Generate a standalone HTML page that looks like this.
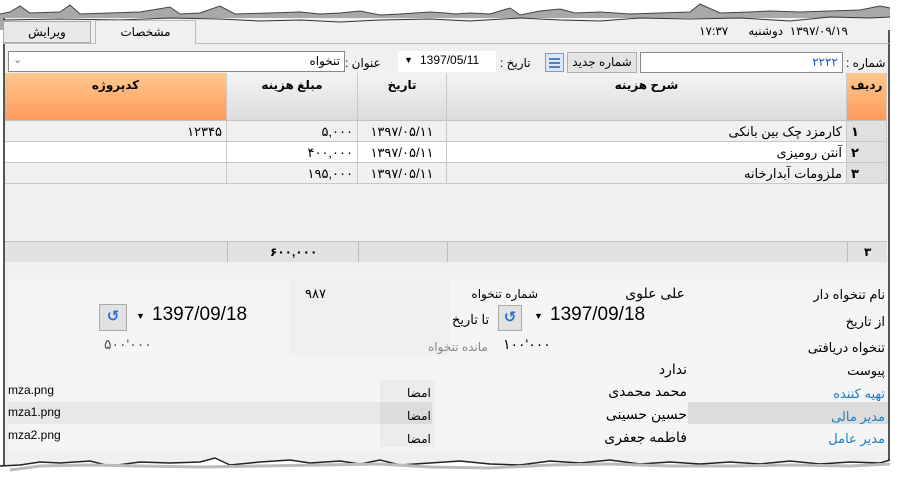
<!DOCTYPE html>
<html><head><meta charset="utf-8"><style>
*{margin:0;padding:0;box-sizing:border-box}
body{width:901px;height:486px;background:#fff;position:relative;overflow:hidden;font-family:"Liberation Sans","DejaVu Sans",sans-serif;font-size:12px;color:#000}
.a{position:absolute}
.win{left:3px;top:18px;width:887px;height:452px;background:#f0f0f0;border-left:2px solid #555;border-right:2px solid #555}
.r{direction:rtl;white-space:nowrap}
.hd{background:linear-gradient(#f4f4f4,#dcdcdc);border-right:1px solid #c8c8c8;font-weight:bold;text-align:center;padding-top:5px;font-size:12px}
.or{background:linear-gradient(#ffc98e,#ff9a5c)}
.cell{border-right:1px solid #c8c8c8;border-bottom:1px solid #c8c8c8;height:21px;line-height:21px;padding:0 4px;font-size:13px}
.lbl{color:#000;font-size:13px}
.blue{color:#1a7fc4}
</style></head><body>
<svg class="a" style="left:0;top:0" width="901" height="30"><polygon points="0,30 0,14 10,12 20,6 30,13 60,12 70,5 80,14 110,13 140,12 170,7 180,14 200,13 220,6 235,14 270,13 300,12 320,14 340,13 360,11 380,15 400,14 430,12 445,13 455,14 470,13 490,14 510,8 520,15 540,11 560,9 575,13 600,12 630,14 660,13 690,12 700,4 720,13 750,12 770,11 800,12 830,11 860,10 880,6 890,8 890,30" fill="#a8a8a8"/><polyline points="0,14 10,12 20,6 30,13 60,12 70,5 80,14 110,13 140,12 170,7 180,14 200,13 220,6 235,14 270,13 300,12 320,14 340,13 360,11 380,15 400,14 430,12 445,13 455,14 470,13 490,14 510,8 520,15 540,11 560,9 575,13 600,12 630,14 660,13 690,12 700,4 720,13 750,12 770,11 800,12 830,11 860,10 880,6 890,8" fill="none" stroke="#444"/></svg>
<div class="a win"></div>
<svg class="a" style="left:0;top:0" width="901" height="30"><polygon points="3,30 3,20 60,19 120,20 170,18 220,19 260,21 300,20 340,22 380,20 430,19 470,21 520,18 560,20 600,21 640,18 690,19 740,18 790,21 830,17 870,18 890,17 890,30" fill="#f0f0f0"/><polyline points="3,20 60,19 120,20 170,18 220,19 260,21 300,20 340,22 380,20 430,19 470,21 520,18 560,20 600,21 640,18 690,19 740,18 790,21 830,17 870,18 890,17" fill="none" stroke="#333"/></svg>
<div class="a" style="left:3px;top:21px;width:88px;height:22px;border:1px solid #aaa;background:#e8e8e8;text-align:center;line-height:20px;font-size:12px">ویرایش</div>
<div class="a" style="left:95px;top:20px;width:101px;height:24px;border:1px solid #bbb;border-bottom:none;background:#f0f0f0;text-align:center;line-height:22px;font-size:12px">مشخصات</div>
<div class="a" style="left:3px;top:43px;width:92px;border-top:1px solid #bbb"></div>
<div class="a" style="left:196px;top:43px;width:693px;border-top:1px solid #bbb"></div>
<div class="a r" style="right:53px;top:24px;font-size:12px">۱۳۹۷/۰۹/۱۹&nbsp;&nbsp;دوشنبه&nbsp;&nbsp;&nbsp;&nbsp;&nbsp;&nbsp;۱۷:۳۷</div>
<div class="a r" style="left:846px;top:56px;font-size:12px">شماره :</div>
<div class="a r" style="left:640px;top:52px;width:203px;height:21px;background:#fff;border:1px solid #888;font-size:12px;padding:2px 4px;color:#1a5fb4">۲۲۲۲</div>
<div class="a" style="left:567px;top:52px;width:70px;height:21px;background:#e3e3e3;border:1px solid #adadad;font-size:12px;text-align:center;line-height:19px">شماره جدید</div>
<div class="a" style="left:545px;top:53px;width:19px;height:19px;background:#dbe8f8;border:1px solid #7a9cc8"><svg width="17" height="17"><g stroke="#2a5da8" stroke-width="1.5"><line x1="3" y1="5" x2="14" y2="5"/><line x1="3" y1="9" x2="14" y2="9"/><line x1="3" y1="13" x2="14" y2="13"/></g></svg></div>
<div class="a r" style="left:500px;top:56px;font-size:12px">تاریخ :</div>
<div class="a" style="left:398px;top:51px;width:98px;height:21px;background:#fff;font-size:12px;line-height:19px;padding-left:22px">1397/05/11</div>
<div class="a" style="left:404px;top:55px;font-size:9px">&#9660;</div>
<div class="a r" style="left:345px;top:56px;font-size:12px">عنوان :</div>
<div class="a r" style="left:8px;top:51px;width:337px;height:21px;background:#fff;border:1px solid #888;font-size:12px;padding:2px 4px">تنخواه</div>
<div class="a" style="left:13px;top:53px;font-size:11px;color:#777">&#8964;</div>
<div class="a" style="left:5px;top:73px;width:882px;height:48px;background:#e0e0e0;border-bottom:1px solid #c0c0c0"></div>
<div class="a hd or r" style="left:847px;top:73px;width:40px;height:47px">ردیف</div>
<div class="a hd r" style="left:447px;top:73px;width:400px;height:47px">شرح هزینه</div>
<div class="a hd r" style="left:358px;top:73px;width:89px;height:47px">تاریخ</div>
<div class="a hd r" style="left:227px;top:73px;width:131px;height:47px">مبلغ هزینه</div>
<div class="a hd or r" style="left:5px;top:73px;width:222px;height:47px">کدپروژه</div>
<div class="a" style="left:5px;top:121px;width:882px">
<div style="display:flex;flex-direction:row-reverse;background:#f0f0f0"><div class="cell" style="width:40px;background:#e0e0e0;font-weight:bold">۱</div><div class="cell r" style="width:400px">کارمزد چک بین بانکی</div><div class="cell" style="width:89px;text-align:center">۱۳۹۷/۰۵/۱۱</div><div class="cell" style="width:131px;text-align:right">۵,۰۰۰</div><div class="cell" style="width:222px;text-align:right">۱۲۳۴۵</div></div>
<div style="display:flex;flex-direction:row-reverse;background:#fff"><div class="cell" style="width:40px;background:#e0e0e0;font-weight:bold">۲</div><div class="cell r" style="width:400px">آنتن رومیزی</div><div class="cell" style="width:89px;text-align:center">۱۳۹۷/۰۵/۱۱</div><div class="cell" style="width:131px;text-align:right">۴۰۰,۰۰۰</div><div class="cell" style="width:222px"></div></div>
<div style="display:flex;flex-direction:row-reverse;background:#f0f0f0"><div class="cell" style="width:40px;background:#e0e0e0;font-weight:bold">۳</div><div class="cell r" style="width:400px">ملزومات آبدارخانه</div><div class="cell" style="width:89px;text-align:center">۱۳۹۷/۰۵/۱۱</div><div class="cell" style="width:131px;text-align:right">۱۹۵,۰۰۰</div><div class="cell" style="width:222px"></div></div>
</div>
<div class="a" style="left:5px;top:241px;width:882px;height:21px;background:#e2e2e2;border-top:1px solid #c0c0c0"></div>
<div class="a" style="left:847px;top:241px;width:1px;height:21px;background:#bbb"></div>
<div class="a" style="left:447px;top:241px;width:1px;height:21px;background:#bbb"></div>
<div class="a" style="left:358px;top:241px;width:1px;height:21px;background:#bbb"></div>
<div class="a" style="left:227px;top:241px;width:1px;height:21px;background:#bbb"></div>
<div class="a" style="left:864px;top:245px;font-size:12px;font-weight:bold">۳</div>
<div class="a" style="left:270px;top:245px;font-size:12px;font-weight:bold">۶۰۰,۰۰۰</div>
<div class="a" style="left:8px;top:279px;width:880px;height:172px;background:#f5f5f5"></div>
<div class="a" style="left:290px;top:280px;width:160px;height:75px;background:#efefef"></div>
<div class="a r lbl" style="right:16px;top:287px">نام تنخواه دار</div>
<div class="a r lbl" style="right:16px;top:314px">از تاریخ</div>
<div class="a r lbl" style="right:16px;top:340px">تنخواه دریافتی</div>
<div class="a r lbl" style="right:16px;top:363px">پیوست</div>
<div class="a" style="left:688px;top:402px;width:200px;height:22px;background:#dcdcdc"></div>
<div class="a" style="left:8px;top:402px;width:372px;height:22px;background:#e8e8e8"></div>
<div class="a" style="left:380px;top:380px;width:55px;height:67px;background:#ececec"></div>
<div class="a" style="left:380px;top:402px;width:52px;height:22px;background:#dcdcdc"></div>
<div class="a r lbl blue" style="right:16px;top:386px">تهیه کننده</div>
<div class="a r lbl blue" style="right:16px;top:409px">مدیر مالی</div>
<div class="a r lbl blue" style="right:16px;top:431px">مدیر عامل</div>
<div class="a r" style="right:216px;top:285px;font-size:14px">علی علوی</div>
<div class="a r" style="right:363px;top:287px;font-size:12px">شماره تنخواه</div>
<div class="a" style="left:305px;top:286px;font-size:13px">۹۸۷</div>
<div class="a" style="left:550px;top:304px;font-size:19px">1397/09/18</div>
<div class="a" style="left:534px;top:311px;font-size:9px">&#9660;</div>
<div class="a" style="left:498px;top:305px;width:24px;height:26px;background:#e2e2e2;border:1px solid #aaa;text-align:center;color:#2b6fd0;font-weight:bold;font-size:15px;line-height:23px">&#8634;</div>
<div class="a r" style="left:452px;top:312px;font-size:13px">تا تاریخ</div>
<div class="a" style="left:152px;top:304px;font-size:19px">1397/09/18</div>
<div class="a" style="left:136px;top:311px;font-size:9px">&#9660;</div>
<div class="a" style="left:99px;top:304px;width:28px;height:27px;background:#e2e2e2;border:1px solid #aaa;text-align:center;color:#2b6fd0;font-weight:bold;font-size:15px;line-height:24px">&#8634;</div>
<div class="a" style="left:503px;top:336px;font-size:14px;letter-spacing:2px">۱۰۰'۰۰۰</div>
<div class="a r" style="left:428px;top:340px;font-size:12px;color:#888">مانده تنخواه</div>
<div class="a" style="left:104px;top:336px;font-size:14px;letter-spacing:2px;color:#555">۵۰۰'۰۰۰</div>
<div class="a r" style="right:214px;top:361px;font-size:14px">ندارد</div>
<div class="a r" style="right:214px;top:383px;font-size:14px">محمد محمدی</div>
<div class="a r" style="right:214px;top:406px;font-size:14px">حسین حسینی</div>
<div class="a r" style="right:214px;top:429px;font-size:14px">فاطمه جعفری</div>
<div class="a r" style="left:407px;top:386px;font-size:12px">امضا</div>
<div class="a r" style="left:407px;top:409px;font-size:12px">امضا</div>
<div class="a r" style="left:407px;top:432px;font-size:12px">امضا</div>
<div class="a" style="left:8px;top:383px;font-size:12px">mza.png</div>
<div class="a" style="left:8px;top:405px;font-size:12px">mza1.png</div>
<div class="a" style="left:8px;top:428px;font-size:12px">mza2.png</div>
<svg class="a" style="left:0;top:450px" width="901" height="36"><polygon points="0,36 0,16 20,15 40,12 60,13 90,11 110,16 140,12 170,13 200,12 215,8 230,15 260,12 290,10 310,13 340,11 360,14 380,10 400,15 430,13 460,11 490,14 520,15 550,11 580,13 610,10 640,14 670,12 700,14 730,12 760,14 790,11 820,14 850,12 880,13 890,10 901,10 901,36" fill="#fff"/><polyline points="0,16 20,15 40,12 60,13 90,11 110,16 140,12 170,13 200,12 215,8 230,15 260,12 290,10 310,13 340,11 360,14 380,10 400,15 430,13 460,11 490,14 520,15 550,11 580,13 610,10 640,14 670,12 700,14 730,12 760,14 790,11 820,14 850,12 880,13 890,10" fill="none" stroke="#222" stroke-width="1.5"/><polyline points="10,20 40,16 90,15 140,16 200,17 260,16 320,15 380,14 430,17 490,18 550,15 610,14 670,16 730,16 790,15 850,16 890,14" fill="none" stroke="#bbb" stroke-width="3"/></svg>
</body></html>
